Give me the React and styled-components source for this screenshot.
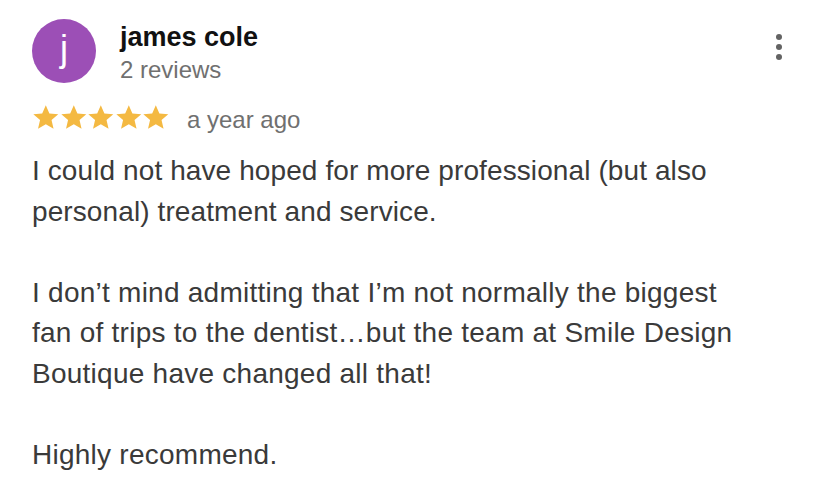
import styled, { createGlobalStyle } from 'styled-components';

const Global = createGlobalStyle`
  html, body {
    margin: 0;
    padding: 0;
    background: #fff;
  }
  body {
    font-family: "Liberation Sans", Arial, sans-serif;
  }
`;

const Card = styled.div`
  width: 828px;
  height: 495px;
  box-sizing: border-box;
  padding: 19px 0 0 32px;
  position: relative;
`;

const Header = styled.div`
  display: flex;
  align-items: flex-start;
`;

const Avatar = styled.div`
  width: 64px;
  height: 64px;
  border-radius: 50%;
  background: #9c4fb6;
  color: #fff;
  display: flex;
  align-items: center;
  justify-content: center;
  font-size: 36px;
  line-height: 1;
  padding-bottom: 4px;
  box-sizing: border-box;
  flex-shrink: 0;
`;

const Who = styled.div`
  margin-left: 24px;
  display: flex;
  flex-direction: column;
`;

const Name = styled.div`
  font-size: 27px;
  font-weight: bold;
  color: #111;
  line-height: 32px;
  margin-top: 2px;
`;

const Count = styled.div`
  font-size: 24px;
  color: #707070;
  line-height: 28px;
  margin-top: 3px;
`;

const Menu = styled.div`
  position: absolute;
  top: 34px;
  right: 46px;
  display: flex;
  flex-direction: column;
  gap: 4px;
`;

const Dot = styled.span`
  width: 6px;
  height: 6px;
  border-radius: 50%;
  background: #636363;
`;

const RatingRow = styled.div`
  display: flex;
  align-items: center;
  margin-top: 18px;
  height: 30px;
`;

const Stars = styled.div`
  display: flex;
`;

const When = styled.span`
  margin: 6px 0 0 17px;
  font-size: 24px;
  color: #707070;
`;

const Body = styled.div`
  margin-top: 19px;
  width: 760px;
`;

const Para = styled.p`
  margin: 0 0 40.5px;
  font-size: 28px;
  line-height: 40.5px;
  color: #3a3a3a;
  letter-spacing: ${(p) => p.$spacing || 0}px;
`;

const Star = () => (
  <svg width="27.6" height="27" viewBox="0 0 24 24">
    <path
      fill="#f4b942"
      d="M12 1.2l3.2 7.3 7.9.6-6 5.2 1.8 7.8L12 17.9l-6.9 4.2 1.8-7.8-6-5.2 7.9-.6z"
    />
  </svg>
);

export default function App() {
  return (
    <Card>
      <Global />
      <Header>
        <Avatar>j</Avatar>
        <Who>
          <Name>james cole</Name>
          <Count>2 reviews</Count>
        </Who>
      </Header>
      <Menu>
        <Dot />
        <Dot />
        <Dot />
      </Menu>
      <RatingRow>
        <Stars>
          {[0, 1, 2, 3, 4].map((i) => (
            <Star key={i} />
          ))}
        </Stars>
        <When>a year ago</When>
      </RatingRow>
      <Body>
        <Para $spacing={0.1}>
          I could not have hoped for more professional (but also
          <br />
          personal) treatment and service.
        </Para>
        <Para $spacing={0.25}>
          I don’t mind admitting that I’m not normally the biggest
          <br />
          fan of trips to the dentist…but the team at Smile Design
          <br />
          Boutique have changed all that!
        </Para>
        <Para $spacing={0.25}>Highly recommend.</Para>
      </Body>
    </Card>
  );
}
